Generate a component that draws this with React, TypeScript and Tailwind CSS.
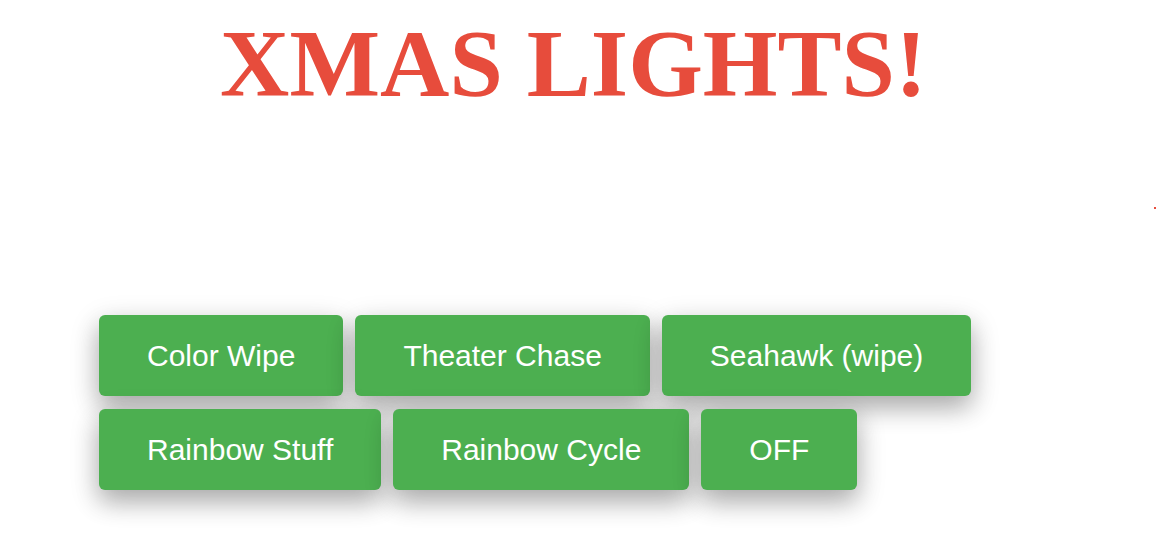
import React from "react";

const Btn = ({ label }: { label: string }) => (
  <button
    className="bg-[#4CAF50] text-white text-[30px] leading-[35px] px-[48px] py-[23px] rounded-[6px] shadow-[0_12px_24px_0_rgba(0,0,0,0.2),0_9px_30px_0_rgba(0,0,0,0.19)] whitespace-nowrap"
    style={{ fontFamily: '"Liberation Sans", Arial, sans-serif' }}
  >
    {label}
  </button>
);

export default function App() {
  return (
    <div className="relative w-[1156px] h-[548px] bg-white overflow-hidden">
      <h1
        className="pt-[9px] text-center text-[96px] leading-[110px] font-bold text-[#E74C3C] pr-[9px]"
        style={{ fontFamily: '"Liberation Serif", "Times New Roman", serif' }}
      >
        XMAS LIGHTS!
      </h1>
      <div className="absolute left-[1154px] top-[207px] w-[2px] h-[2px] bg-[#E74C3C]" />
      <div className="mt-[196px] pl-[99px] flex flex-col gap-[12.5px]">
        <div className="flex gap-[12px]">
          <Btn label="Color Wipe" />
          <Btn label="Theater Chase" />
          <Btn label="Seahawk (wipe)" />
        </div>
        <div className="flex gap-[12px]">
          <Btn label="Rainbow Stuff" />
          <Btn label="Rainbow Cycle" />
          <Btn label="OFF" />
        </div>
      </div>
    </div>
  );
}
